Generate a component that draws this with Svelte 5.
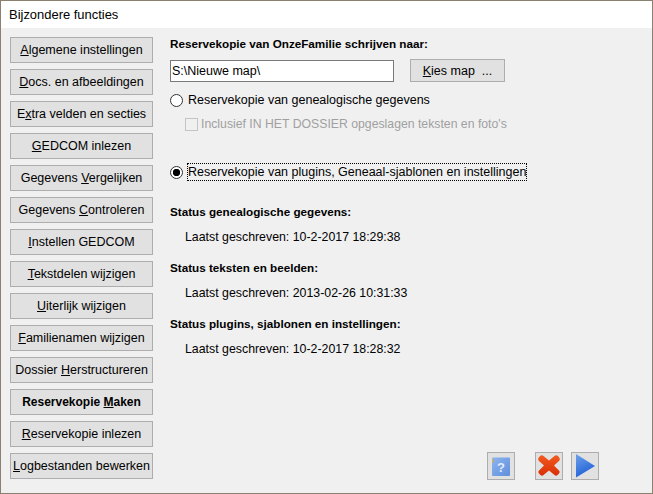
<script>
  const menu = [
    { pre: "", key: "A", post: "lgemene instellingen" },
    { pre: "", key: "D", post: "ocs. en afbeeldingen" },
    { pre: "E", key: "x", post: "tra velden en secties" },
    { pre: "", key: "G", post: "EDCOM inlezen" },
    { pre: "Gegevens ", key: "V", post: "ergelijken" },
    { pre: "Gegevens ", key: "C", post: "ontroleren" },
    { pre: "", key: "I", post: "nstellen GEDCOM" },
    { pre: "", key: "T", post: "ekstdelen wijzigen" },
    { pre: "", key: "U", post: "iterlijk wijzigen" },
    { pre: "", key: "F", post: "amilienamen wijzigen" },
    { pre: "Dossier ", key: "H", post: "erstructureren" },
    { pre: "Reservekopie ", key: "M", post: "aken", active: true },
    { pre: "", key: "R", post: "eservekopie inlezen" },
    { pre: "", key: "L", post: "ogbestanden bewerken" },
  ];

  const statuses = [
    { title: "Status genealogische gegevens:", value: "Laatst geschreven: 10-2-2017 18:29:38" },
    { title: "Status teksten en beelden:", value: "Laatst geschreven: 2013-02-26 10:31:33" },
    { title: "Status plugins, sjablonen en instellingen:", value: "Laatst geschreven: 10-2-2017 18:28:32" },
  ];

  let target = $state("plugins");
</script>

<div class="window">
  <header class="titlebar">Bijzondere functies</header>

  <div class="body">
    <nav class="menu">
      {#each menu as item}
        <button class="btn" class:active={item.active}>{item.pre}<u>{item.key}</u>{item.post}</button>
      {/each}
    </nav>

    <main class="content">
      <h2 class="heading">Reservekopie van OnzeFamilie schrijven naar:</h2>

      <div class="path-row">
        <input class="path" type="text" value="S:\Nieuwe map\" />
        <button class="btn choose"><u>K</u>ies map&nbsp; ...</button>
      </div>

      <label class="radio first">
        <input type="radio" name="target" value="data" bind:group={target} />
        <span>Reservekopie van genealogische gegevens</span>
      </label>

      <label class="check">
        <input type="checkbox" disabled />
        <span>Inclusief IN HET DOSSIER opgeslagen teksten en foto's</span>
      </label>

      <label class="radio second">
        <input type="radio" name="target" value="plugins" bind:group={target} />
        <span class="focus">Reservekopie van plugins, Geneaal-sjablonen en instellingen</span>
      </label>

      <section class="statuses">
        {#each statuses as status}
          <div class="status">
            <h3 class="heading">{status.title}</h3>
            <p>{status.value}</p>
          </div>
        {/each}
      </section>

      <div class="actions">
        <button class="icon-btn help" aria-label="Help">
          <svg width="24" height="24" viewBox="0 0 24 24">
            <defs>
              <linearGradient id="book" x1="0" y1="0" x2="1" y2="1">
                <stop offset="0" stop-color="#8db4ee" />
                <stop offset="1" stop-color="#5f8fdc" />
              </linearGradient>
            </defs>
            <rect x="3" y="3.5" width="18" height="18.5" rx="1" fill="url(#book)" />
            <rect x="3" y="5" width="1.2" height="4" fill="#d8b050" />
            <text x="12" y="17.5" text-anchor="middle" class="qmark">?</text>
          </svg>
        </button>
        <button class="icon-btn cancel" aria-label="Annuleren">
          <svg width="24" height="24" viewBox="0 0 24 24">
            <defs>
              <linearGradient id="cross" x1="0" y1="0" x2="0" y2="1">
                <stop offset="0" stop-color="#f25a1e" />
                <stop offset="1" stop-color="#d92f06" />
              </linearGradient>
            </defs>
            <path d="M3 2 Q5 0.5 6.5 2 L12 6.5 L17.5 2 Q19 0.5 21 2 L22.5 4 Q23.5 5.5 22 7 L17 11.5 L22 16.5 Q23.5 18 22 19.5 L20.5 21 Q19 22.5 17.5 21 L12 16.5 L6.5 21 Q5 22.5 3.5 21 L2 19.5 Q0.5 18 2 16.5 L7 11.5 L2 7 Q0.5 5.5 1.5 4 Z" fill="url(#cross)" />
          </svg>
        </button>
        <button class="icon-btn go" aria-label="Verder">
          <svg width="24" height="24" viewBox="0 0 24 24">
            <defs>
              <linearGradient id="play" x1="0" y1="0" x2="0.4" y2="1">
                <stop offset="0" stop-color="#6fa2ea" />
                <stop offset="1" stop-color="#1f60d6" />
              </linearGradient>
            </defs>
            <path d="M3 0 L22 12 L3 23.5 Z" fill="url(#play)" />
          </svg>
        </button>
      </div>
    </main>
  </div>
</div>

<style>
  :global(body) {
    margin: 0;
    background: #f0f0f0;
  }

  .window {
    box-sizing: border-box;
    width: 653px;
    height: 494px;
    display: flex;
    flex-direction: column;
    border: 1px solid #8a8170;
    background: #f0f0f0;
    font-family: "Liberation Sans", Arial, sans-serif;
    font-size: 12.5px;
    color: #000;
  }

  .titlebar {
    height: 27px;
    line-height: 27px;
    padding-left: 8px;
    background: #fff;
    font-size: 12.95px;
    flex: none;
  }

  .body {
    flex: 1;
    display: flex;
    min-height: 0;
  }

  .menu {
    width: 143px;
    margin: 9px 0 0 9px;
    display: flex;
    flex-direction: column;
    gap: 6px;
    flex: none;
  }

  .btn {
    box-sizing: border-box;
    height: 26px;
    padding: 0;
    border: 1px solid #adadad;
    background: #e1e1e1;
    font: inherit;
    color: inherit;
    white-space: nowrap;
  }

  .btn.active {
    font-size: 12px;
    font-weight: bold;
  }

  .content {
    flex: 1;
    position: relative;
    padding: 9px 0 0 17px;
  }

  .heading {
    margin: 0;
    font-size: 11.7px;
    font-weight: bold;
    line-height: 14px;
  }

  .path-row {
    display: flex;
    align-items: flex-start;
    gap: 16px;
    margin-top: 8px;
  }

  .path {
    box-sizing: border-box;
    width: 224px;
    height: 22px;
    margin-top: 1px;
    padding: 0 1px;
    border: 1px solid #7a7a7a;
    border-radius: 0;
    outline: none;
    background: #fff;
    font: inherit;
    color: #000;
  }

  .choose {
    width: 95px;
    height: 23px;
  }

  .radio,
  .check {
    display: flex;
    align-items: center;
    height: 16px;
  }

  .radio input {
    appearance: none;
    box-sizing: border-box;
    flex: none;
    width: 13px;
    height: 13px;
    margin: 0 5px 0 0;
    border: 1px solid #333;
    border-radius: 50%;
    background: #fff;
  }

  .radio input:checked {
    background: radial-gradient(circle, #000 0 3.4px, #fff 4px);
  }

  .radio.first {
    margin-top: 10px;
  }

  .check {
    margin-top: 8px;
    margin-left: 15px;
    font-size: 12.25px;
    color: #a0a0a0;
  }

  .check input {
    appearance: none;
    box-sizing: border-box;
    flex: none;
    width: 13px;
    height: 13px;
    margin: 0 3px 0 0;
    border: 1px solid #c4c4c4;
    background: #f0f0f0;
  }

  .radio.second {
    margin-top: 32px;
  }

  .focus {
    line-height: 16px;
    outline: 1px dotted #000;
    outline-offset: 0;
  }

  .statuses {
    margin-top: 25px;
    display: flex;
    flex-direction: column;
    gap: 17px;
  }

  .status p {
    margin: 11px 0 0 15px;
    font-size: 12.35px;
    line-height: 14px;
  }

  .actions {
    position: absolute;
    left: 334px;
    top: 424px;
    display: flex;
  }

  .icon-btn {
    box-sizing: border-box;
    width: 28px;
    height: 28px;
    padding: 0;
    display: flex;
    align-items: center;
    justify-content: center;
    border: 1px solid #adadad;
    background: #e1e1e1;
  }

  .cancel {
    margin-left: 20px;
    margin-right: 8px;
  }

  .qmark {
    font-family: "Liberation Sans", Arial, sans-serif;
    font-size: 13px;
    font-weight: bold;
    fill: #e4ecfa;
  }
</style>
